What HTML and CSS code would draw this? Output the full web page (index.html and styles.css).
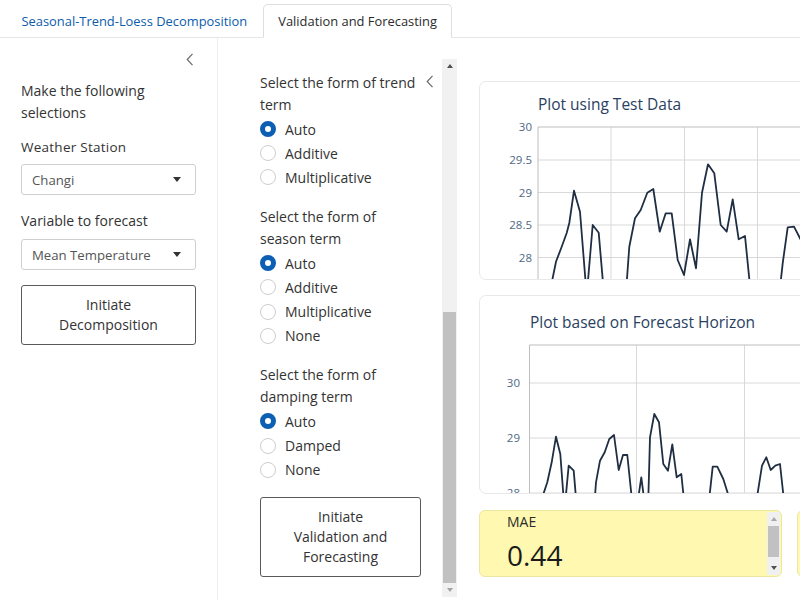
FILE: index.html
```html
<!DOCTYPE html>
<html lang="en">
<head>
<meta charset="utf-8">
<title>Validation and Forecasting</title>
<link rel="stylesheet" href="styles.css">
</head>
<body>
<nav class="tabs">
  <a class="tab">Seasonal-Trend-Loess Decomposition</a>
  <a class="tab active">Validation and Forecasting</a>
</nav>
<div class="layout">
  <aside class="sidebar">
    <div class="toggle-row">
      <svg class="chev" width="8" height="13" viewBox="0 0 8 13"><path d="M6.5 0.8 L1.2 6.5 L6.5 12.2" fill="none" stroke="#6b6b6b" stroke-width="1.2"/></svg>
    </div>
    <p class="intro">Make the following selections</p>
    <div class="field-label">Weather Station</div>
    <div class="select"><span>Changi</span><span class="caret"></span></div>
    <div class="field-label second">Variable to forecast</div>
    <div class="select"><span>Mean Temperature</span><span class="caret"></span></div>
    <div class="btn btn-left"><span>Initiate</span><span>Decomposition</span></div>
  </aside>

  <section class="mid">
    <div class="mid-content">
      <div class="group">
        <p class="q">Select the form of trend term</p>
        <div class="radio"><span class="dot on"></span>Auto</div>
        <div class="radio"><span class="dot"></span>Additive</div>
        <div class="radio"><span class="dot"></span>Multiplicative</div>
      </div>
      <div class="group">
        <p class="q">Select the form of season term</p>
        <div class="radio"><span class="dot on"></span>Auto</div>
        <div class="radio"><span class="dot"></span>Additive</div>
        <div class="radio"><span class="dot"></span>Multiplicative</div>
        <div class="radio"><span class="dot"></span>None</div>
      </div>
      <div class="group">
        <p class="q">Select the form of damping term</p>
        <div class="radio"><span class="dot on"></span>Auto</div>
        <div class="radio"><span class="dot"></span>Damped</div>
        <div class="radio"><span class="dot"></span>None</div>
      </div>
      <div class="btn btn-mid"><span>Initiate</span><span>Validation and</span><span>Forecasting</span></div>
    </div>
    <div class="mid-toggle">
      <svg class="chev" width="8" height="13" viewBox="0 0 8 13"><path d="M6.5 0.8 L1.2 6.5 L6.5 12.2" fill="none" stroke="#6b6b6b" stroke-width="1.2"/></svg>
    </div>
    <div class="scrollbar">
      <div class="sb-btn"><span class="tri-up"></span></div>
      <div class="sb-track"><div class="sb-thumb"></div></div>
      <div class="sb-btn"><span class="tri-down"></span></div>
    </div>
  </section>

  <main class="main">
    <div class="card">
      <svg width="400" height="199" viewBox="0 0 400 199">
        <text class="ptitle" x="59" y="28.5">Plot using Test Data</text>
        <g class="grid">
          <line x1="59" y1="79" x2="400" y2="79"/>
          <line x1="59" y1="111.5" x2="400" y2="111.5"/>
          <line x1="59" y1="144" x2="400" y2="144"/>
          <line x1="59" y1="176.5" x2="400" y2="176.5"/>
          <line x1="132" y1="46" x2="132" y2="199"/>
          <line x1="205.5" y1="46" x2="205.5" y2="199"/>
          <line x1="278.5" y1="46" x2="278.5" y2="199"/>
          <line x1="351.5" y1="46" x2="351.5" y2="199"/>
        </g>
        <g class="frame">
          <line x1="59" y1="46" x2="400" y2="46"/>
          <line x1="59" y1="46" x2="59" y2="199"/>
        </g>
        <g class="tick">
          <text x="53" y="50">30</text>
          <text x="53" y="83">29.5</text>
          <text x="53" y="115.5">29</text>
          <text x="53" y="148">28.5</text>
          <text x="53" y="180.5">28</text>
        </g>
        <polyline class="series" points="68,225 77,180.7 82.7,165.7 87.7,152 90.3,142 95,109.7 101,130.7 107.7,215 113.7,144 119.7,151.7 126,225 146,225 150.3,165.7 156,137.3 161.7,129 168.3,111.7 174.3,108 180.7,150.7 186.7,132.3 192.7,132.3 198.7,179 205,194 211,158.3 217,187.3 223,111.7 229,83.3 235.3,92.3 241.7,144 247.7,150.7 253.7,118.3 259.7,158.3 266,155 273,225 299,225 303.7,182.3 308.7,146.3 315,145.7 321,157.3 330,175 340,160"/>
      </svg>
    </div>
    <div class="card card2">
      <svg width="400" height="199" viewBox="0 0 400 199">
        <text class="ptitle" x="51" y="32.5">Plot based on Forecast Horizon</text>
        <g class="grid">
          <line x1="50.5" y1="88" x2="400" y2="88"/>
          <line x1="50.5" y1="143" x2="400" y2="143"/>
          <line x1="50.5" y1="198" x2="400" y2="198"/>
          <line x1="157.5" y1="50" x2="157.5" y2="199"/>
          <line x1="265.5" y1="50" x2="265.5" y2="199"/>
          <line x1="373.5" y1="50" x2="373.5" y2="199"/>
        </g>
        <g class="frame">
          <line x1="50.5" y1="50" x2="400" y2="50"/>
          <line x1="50.5" y1="50" x2="50.5" y2="199"/>
        </g>
        <g class="tick">
          <text x="41" y="92">30</text>
          <text x="41" y="147">29</text>
          <text x="41" y="202">28</text>
        </g>
        <polyline class="series" points="60,212 68.3,187.3 72.7,167.3 77,141.7 81.3,159 85.5,215 89.7,170.7 94.7,175.7 98,215 115,215 117,187.3 121,165.7 125.7,157.3 130.3,144 135,140 139.7,175 144,160 148.3,160 154,215 157.5,215 162.3,182.3 166.5,215 169,215 171,142.3 175.3,119 180,127.3 184.3,169 189,175.7 193.3,149.3 197.7,182.3 202.3,179 206,215 229,215 233.7,171.7 238.3,171.7 244.3,184 254,215 276,215 283,170.7 287.3,162.3 291.7,175 296.3,170.7 301,169 306,215 330,215 340,180"/>
      </svg>
    </div>
    <div class="values">
      <div class="vbox">
        <div class="vbox-body">
          <div class="vtitle">MAE</div>
          <div class="vvalue">0.44</div>
        </div>
        <div class="vscroll">
          <div class="vs-btn"><span class="vtri-up"></span></div>
          <div class="vs-thumb"></div>
          <div class="vs-space"></div>
          <div class="vs-btn"><span class="vtri-down"></span></div>
        </div>
      </div>
      <div class="vbox"></div>
    </div>
  </main>
</div>
</body>
</html>
```
FILE: styles.css
```css
* { box-sizing: border-box; }
html, body { margin: 0; padding: 0; }
body {
  width: 800px;
  height: 600px;
  overflow: hidden;
  background: #fff;
  color: #333;
  font-family: "Open Sans", "DejaVu Sans", sans-serif;
  font-size: 14px;
}

/* tabs */
.tabs {
  display: flex;
  align-items: flex-end;
  height: 38px;
  padding-left: 6px;
  border-bottom: 1px solid #e6e6e6;
}
.tab {
  display: block;
  height: 34px;
  margin-bottom: -1px;
  padding: 0 14.5px;
  line-height: 33px;
  font-size: 12.9px;
  font-weight: 500;
  color: #0b5cad;
  border: 1px solid transparent;
  border-radius: 5px 5px 0 0;
}
.tab.active {
  color: #2b2b2b;
  background: #fff;
  border-color: #dedede #dedede #fff;
}

.layout {
  display: flex;
  height: 562px;
}

/* left sidebar */
.sidebar {
  flex: none;
  width: 218px;
  padding: 15px 21px 0 21px;
  border-right: 1px solid #ededed;
}
.toggle-row {
  display: flex;
  justify-content: flex-end;
  height: 12px;
  padding-right: 2px;
}
.chev { display: block; }
.intro {
  margin: 15px 0 0;
  line-height: 22px;
}
.field-label {
  margin-top: 13px;
  line-height: 20px;
  font-size: 13.5px;
  letter-spacing: 0.25px;
}
.field-label.second {
  margin-top: 16px;
  font-size: 14px;
  letter-spacing: 0;
}
.select {
  display: flex;
  align-items: center;
  justify-content: space-between;
  height: 31px;
  margin-top: 7px;
  padding: 0 14px 0 10px;
  border: 1px solid #cfcfcf;
  border-radius: 3px;
  font-size: 13.2px;
  color: #555;
}
.field-label.second + .select { margin-top: 8px; }
.caret {
  width: 0;
  height: 0;
  border-left: 4.5px solid transparent;
  border-right: 4.5px solid transparent;
  border-top: 5px solid #333;
}
.btn {
  display: flex;
  flex-direction: column;
  align-items: center;
  padding: 9px 6px;
  border: 1px solid #5a5a5a;
  border-radius: 3px;
  line-height: 20px;
  color: #333;
}
.btn-left { margin-top: 15px; }

/* middle sidebar */
.mid {
  flex: none;
  display: flex;
  width: 239px;
  height: 538px;
  margin-top: 21px;
}
.mid-content {
  width: 203px;
  padding: 12.5px 0 0 42px;
}
.group + .group { margin-top: 16px; }
.q {
  margin: 0 0 1.5px;
  line-height: 22px;
}
.radio {
  display: flex;
  align-items: center;
  gap: 9px;
  height: 24.2px;
}
.dot {
  flex: none;
  width: 16px;
  height: 16px;
  border: 1px solid #cdcdcd;
  border-radius: 50%;
  background: #fff;
}
.dot.on {
  border: 5px solid #0d5fb3;
}
.btn-mid {
  width: 161px;
  margin-top: 15px;
}
.mid-toggle {
  width: 21px;
  padding: 16px 0 0 5px;
}
.scrollbar {
  display: flex;
  flex-direction: column;
  width: 15px;
  background: #f1f1f1;
}
.sb-btn {
  display: flex;
  align-items: center;
  justify-content: center;
  height: 14px;
}
.sb-track {
  flex: 1;
  display: flex;
  flex-direction: column;
  justify-content: flex-end;
  padding: 0 1px;
}
.sb-thumb {
  height: 271px;
  background: #c1c1c1;
}
.tri-up, .tri-down, .vtri-up, .vtri-down {
  width: 0;
  height: 0;
  border-left: 3.5px solid transparent;
  border-right: 3.5px solid transparent;
}
.tri-up { border-bottom: 4px solid #505050; }
.tri-down { border-top: 4px solid #a3a3a3; }

/* main */
.main {
  flex: 1;
  min-width: 0;
  overflow: hidden;
  padding: 43px 0 0 22px;
}
.card {
  width: 400px;
  height: 199px;
  border: 1px solid #e8e8e8;
  border-radius: 7px;
  overflow: hidden;
  background: #fff;
}
.card svg { display: block; margin: -1px 0 0 -1px; }
.card2 { margin-top: 15px; }
.ptitle {
  font-family: "Open Sans", sans-serif;
  font-size: 15.5px;
  fill: #2a3f5f;
}
.tick text {
  font-family: "Open Sans", sans-serif;
  font-size: 11.5px;
  fill: #506784;
  text-anchor: end;
}
.grid line { stroke: #d9d9d9; stroke-width: 1; }
.frame line { stroke: #bdbdbd; stroke-width: 1; }
.series {
  fill: none;
  stroke: #1f2e42;
  stroke-width: 1.8;
  stroke-linejoin: round;
}

.values {
  display: flex;
  gap: 15px;
  margin-top: 16px;
}
.vbox {
  flex: none;
  display: flex;
  width: 303px;
  height: 67px;
  background: #fff8b0;
  border: 1px solid #ebe6a0;
  border-radius: 6px;
}
.vbox-body {
  flex: 1;
  padding: 1px 0 0 27px;
}
.vtitle {
  line-height: 20px;
  font-size: 14px;
  color: #2b2b2b;
}
.vvalue {
  margin-top: 5px;
  line-height: 36px;
  font-size: 28px;
  color: #1a1a1a;
}
.vscroll {
  display: flex;
  flex-direction: column;
  width: 13px;
  margin: 1px 1px 1px 0;
  background: #f0f0f0;
}
.vs-btn {
  display: flex;
  align-items: center;
  justify-content: center;
  height: 14px;
}
.vs-thumb {
  height: 31px;
  margin: 0 1px;
  background: #c1c1c1;
}
.vs-space { flex: 1; }
.vtri-up { border-bottom: 4px solid #a8a8a8; }
.vtri-down { border-top: 4px solid #505050; }
```
